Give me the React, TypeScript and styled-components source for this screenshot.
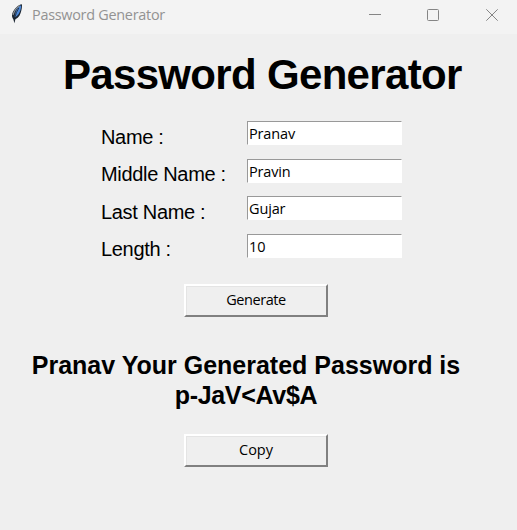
import React, { useState } from 'react';
import styled, { createGlobalStyle } from 'styled-components';

const GlobalStyle = createGlobalStyle`
  * { box-sizing: border-box; }
  body { margin: 0; background: #efefef; overflow: hidden; }
`;

const Window = styled.div`
  width: 517px;
  height: 530px;
  background: #efefef;
  color: #000;
  display: flex;
  flex-direction: column;
  font-family: 'Liberation Sans', Arial, sans-serif;
`;

const TitleBar = styled.header`
  display: flex;
  height: 34px;
  flex: none;
  background: #f3f3f3;
`;

const FeatherIcon = styled.svg`
  flex: none;
  width: 14px;
  height: 22px;
  margin: 3px 0 0 10px;
`;

const Caption = styled.div`
  flex: 1;
  margin-left: 8px;
  font: 14.4px/29px 'Open Sans', sans-serif;
  letter-spacing: -0.26px;
  color: #929292;
  white-space: nowrap;
`;

const WindowControls = styled.svg`
  flex: none;
  width: 167px;
  height: 34px;
  fill: none;
  stroke: #858585;
`;

const Heading = styled.h1`
  margin: 16px 0 0 63px;
  font-size: 42px;
  line-height: 50px;
  font-weight: 700;
  letter-spacing: -0.68px;
  white-space: nowrap;
`;

const Form = styled.form`
  display: grid;
  grid-template-columns: 146px 156px;
  grid-auto-rows: 37.5px;
  margin: 21px 0 0 101px;
`;

const Label = styled.label`
  padding-top: 3.8px;
  font-size: 20px;
  line-height: 24px;
  letter-spacing: -0.32px;
  white-space: nowrap;
`;

const Entry = styled.input`
  width: 155px;
  height: 24px;
  margin: 0;
  padding: 1px 1px 0;
  border: 1px solid #fff;
  border-top: 1px solid #999;
  border-left: 1px solid #999;
  border-radius: 0;
  outline: none;
  background: #fff;
  color: #000;
  font: 14.5px 'Open Sans', sans-serif;
  letter-spacing: -0.15px;
`;

const PushButton = styled.button<{ $gap: number; $tracking: number }>`
  width: 144px;
  height: 33px;
  flex: none;
  margin: ${(p) => p.$gap}px 0 0 184px;
  padding: 0 0 2px;
  border: 2px solid;
  border-color: #fff #808080 #808080 #fff;
  border-radius: 0;
  box-shadow: inset 1px 1px #e4e4e4;
  background: #efefef;
  color: #000;
  font: 14.5px 'Open Sans', sans-serif;
  letter-spacing: ${(p) => p.$tracking}px;
`;

const Result = styled.output`
  display: block;
  width: 430px;
  margin: 33px 0 0 31px;
  font-size: 25px;
  font-weight: 700;
  line-height: 30px;
  text-align: center;
  white-space: nowrap;
`;

const Password = styled.span`
  letter-spacing: -0.3px;
`;

const initialFields = [
  { id: 'name', label: 'Name :', value: 'Pranav' },
  { id: 'middle', label: 'Middle Name :', value: 'Pravin' },
  { id: 'last', label: 'Last Name :', value: 'Gujar' },
  { id: 'length', label: 'Length :', value: '10' },
];

export default function App() {
  const [fields, setFields] = useState(initialFields);
  const update = (id: string, value: string) =>
    setFields((all) => all.map((f) => (f.id === id ? { ...f, value } : f)));

  return (
    <Window>
      <GlobalStyle />
      <TitleBar>
        <FeatherIcon viewBox="0 0 14 22" aria-hidden="true">
          <path d="M11.8 1.2C8.3 1.7 4.2 5.6 2.4 10.2C1.6 12.7 2 14.5 3.4 16.4L4.4 20.2L5.4 16.3C9 14.5 10.6 11.2 11.4 7.2C11.9 4.6 12.3 2.6 11.8 1.2Z" fill="#1c2632" />
          <path d="M11 2.2C7.8 4 5 8.5 4.6 14.6C8.7 12.7 9.9 9.1 10.7 6.3C11.1 4.5 11.4 3.2 11 2.2Z" fill="#4a86d6" />
          <path d="M9.6 2.5C6.5 4.6 4 8.5 3 12" stroke="#8f9599" strokeWidth="1.1" fill="none" />
          <path d="M8.8 5L6.4 9.5L4.5 15.5" stroke="#16202c" strokeWidth=".8" fill="none" />
        </FeatherIcon>
        <Caption>Password Generator</Caption>
        <WindowControls viewBox="0 0 167 34" aria-hidden="true">
          <path d="M19 14.5H31" />
          <rect x="77.5" y="9.5" width="11" height="11" rx="1" />
          <path d="M136.3 9.3L147.7 20.7M147.7 9.3L136.3 20.7" />
        </WindowControls>
      </TitleBar>
      <Heading>Password Generator</Heading>
      <Form onSubmit={(e) => e.preventDefault()}>
        {fields.map((f) => (
          <React.Fragment key={f.id}>
            <Label htmlFor={f.id}>{f.label}</Label>
            <Entry id={f.id} value={f.value} onChange={(e) => update(f.id, e.target.value)} />
          </React.Fragment>
        ))}
      </Form>
      <PushButton type="button" $gap={13} $tracking={-0.45}>Generate</PushButton>
      <Result>
        Pranav Your Generated Password is
        <br />
        <Password>p-JaV&lt;Av$A</Password>
      </Result>
      <PushButton type="button" $gap={24} $tracking={0}>Copy</PushButton>
    </Window>
  );
}
